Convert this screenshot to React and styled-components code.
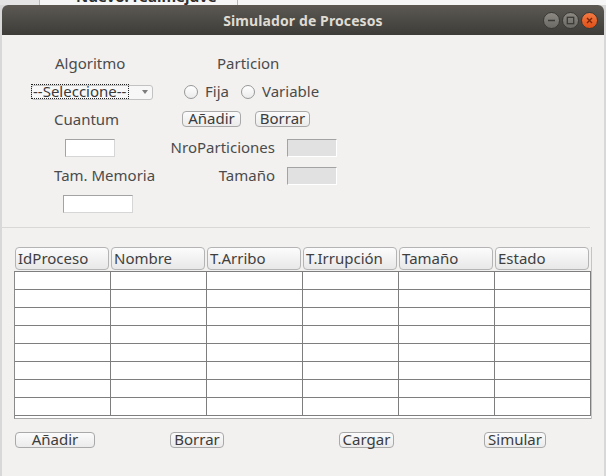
import React from "react";
import styled, { createGlobalStyle } from "styled-components";

const GlobalStyle = createGlobalStyle`
  html, body {
    margin: 0;
    padding: 0;
    background: #d8d8d8;
  }
  body {
    width: 606px;
    height: 476px;
    overflow: hidden;
    font-family: "Noto Sans", "Open Sans", sans-serif;
  }
  * { box-sizing: border-box; }
`;

const COLUMNS = ["IdProceso", "Nombre", "T.Arribo", "T.Irrupción", "Tamaño", "Estado"];
const ROWS = 8;

const App = () => {
  return (
    <>
      <GlobalStyle />
      <Page>
        <Backdrop>
          <BackdropSide />
          <BackdropIcon>
            <svg width="13" height="5" viewBox="0 0 13 5">
              <rect x="0.5" y="-6" width="10" height="10" fill="#fff" stroke="#6a6a6a" />
              <path d="M7 5 L12 -1" stroke="#4e9a06" strokeWidth="3" />
            </svg>
          </BackdropIcon>
          <BackdropText>Nuevo: realmejuve</BackdropText>
        </Backdrop>

        <Window>
          <TitleBar>
            <span />
            <Title>Simulador de Procesos</Title>
            <Controls>
              <WinButton>
                <svg width="17" height="17" viewBox="0 0 17 17">
                  <path d="M5 8.5 H12" stroke="#3b3a36" strokeWidth="1.6" />
                </svg>
              </WinButton>
              <WinButton>
                <svg width="17" height="17" viewBox="0 0 17 17">
                  <rect x="5.3" y="5.3" width="6.4" height="6.4" fill="none" stroke="#3b3a36" strokeWidth="1.3" />
                </svg>
              </WinButton>
              <WinButton $close>
                <svg width="17" height="17" viewBox="0 0 17 17">
                  <path d="M6 6 L11 11 M11 6 L6 11" stroke="#7a2406" strokeWidth="1.4" />
                </svg>
              </WinButton>
            </Controls>
          </TitleBar>

          <Content>
            <FormGrid>
              <Cell $at={53}><Label>Algoritmo</Label></Cell>
              <Cell $at={47}><Label>Particion</Label></Cell>

              <Cell $at={29}>
                <Combo>
                  <ComboText>--Seleccione--</ComboText>
                  <ComboArrow />
                </Combo>
              </Cell>
              <Cell $at={14}>
                <Radio />
                <RadioLabel>Fija</RadioLabel>
                <Radio />
                <RadioLabel>Variable</RadioLabel>
              </Cell>

              <Cell $at={52}><Label>Cuantum</Label></Cell>
              <Cell $at={12} $up>
                <Button $w={59}>Añadir</Button>
                <Button $w={55} $gap={14}>Borrar</Button>
              </Cell>

              <Cell $at={63}><Field $w={50} /></Cell>
              <Cell $at={0}>
                <FieldLabel>NroParticiones</FieldLabel>
                <Field $w={50} $disabled />
              </Cell>

              <Cell $at={52}><Label>Tam. Memoria</Label></Cell>
              <Cell $at={0}>
                <FieldLabel>Tamaño</FieldLabel>
                <Field $w={50} $disabled />
              </Cell>

              <Cell $at={61}><Field $w={70} /></Cell>
              <Cell $at={0} />
            </FormGrid>

            <Separator />

            <TablePane>
              <HeaderRow>
                {COLUMNS.map((c) => (
                  <HeaderCell key={c}>{c}</HeaderCell>
                ))}
              </HeaderRow>
              <TableBody>
                {Array.from({ length: ROWS * COLUMNS.length }).map((_, i) => (
                  <BodyCell key={i} />
                ))}
              </TableBody>
              <TableFoot />
            </TablePane>

            <ButtonRow>
              <Button $w={80}>Añadir</Button>
              <Button $w={54}>Borrar</Button>
              <Button $w={55}>Cargar</Button>
              <Button $w={62}>Simular</Button>
            </ButtonRow>
          </Content>
        </Window>
      </Page>
    </>
  );
};

const Page = styled.div`
  display: flex;
  flex-direction: column;
  width: 606px;
  height: 476px;
`;

const Backdrop = styled.div`
  display: flex;
  height: 5px;
  overflow: hidden;
  background: #f6f6f6;
`;

const BackdropSide = styled.div`
  width: 40px;
  background: #e4e4e4;
  border-right: 1px solid #b9b9b9;
`;

const BackdropIcon = styled.div`
  margin-left: 7px;
`;

const BackdropText = styled.div`
  margin-left: 16px;
  margin-top: -13px;
  font-weight: 700;
  font-size: 15px;
  line-height: 18px;
  color: #2f2f2f;
  padding-right: 20px;
  border-right: 1px solid #b9b9b9;
`;

const Window = styled.div`
  margin-left: 2px;
  width: 602px;
  flex: 1;
  background: #f2f1f0;
  border-radius: 6px 6px 0 0;
  overflow: hidden;
`;

const TitleBar = styled.div`
  height: 30px;
  display: grid;
  grid-template-columns: 1fr auto 1fr;
  align-items: center;
  background: linear-gradient(#5c5953, #3d3c38);
`;

const Title = styled.div`
  font-weight: 700;
  font-size: 14px;
  color: #dfdbd2;
  letter-spacing: 0.1px;
`;

const Controls = styled.div`
  justify-self: end;
  display: flex;
  gap: 2px;
  padding-right: 6px;
`;

const WinButton = styled.div`
  width: 17px;
  height: 17px;
  border-radius: 50%;
  border: 1px solid #3a3935;
  background: ${(p) =>
    p.$close
      ? "linear-gradient(#f37a44, #df4f17)"
      : "linear-gradient(#8c8983, #6b6964)"};
  display: flex;
  align-items: center;
  justify-content: center;
  svg { margin: -1px; }
`;

const Content = styled.div`
  padding-top: 15px;
`;

const FormGrid = styled.div`
  display: grid;
  grid-template-columns: 168px 1fr;
  grid-auto-rows: 28px;
`;

const Cell = styled.div`
  display: flex;
  align-items: center;
  padding-left: ${(p) => p.$at}px;
  padding-bottom: ${(p) => (p.$up ? 2 : 0)}px;
`;

const Label = styled.span`
  font-size: 15px;
  line-height: 20px;
  margin-top: -2px;
  color: #4b4b4b;
`;

const FieldLabel = styled(Label)`
  width: 105px;
  text-align: right;
  margin-right: 12px;
`;

const Combo = styled.div`
  display: flex;
  align-items: center;
  width: 122px;
  height: 15px;
  border: 1px solid #c2c2c2;
  border-radius: 3px;
  background: #f7f7f7;
`;

const ComboText = styled.span`
  height: 15px;
  margin-left: -1px;
  margin-top: -1px;
  padding: 0 2px 0 1px;
  border: 1px dotted #222;
  font-size: 15px;
  line-height: 12px;
  color: #3a3a3a;
`;

const ComboArrow = styled.span`
  margin-left: auto;
  margin-right: 4px;
  width: 0;
  height: 0;
  border-left: 3.5px solid transparent;
  border-right: 3.5px solid transparent;
  border-top: 4px solid #7c7c7c;
`;

const Radio = styled.span`
  width: 14px;
  height: 14px;
  border-radius: 50%;
  border: 1px solid #979797;
  background: linear-gradient(#ffffff, #ebebeb);
`;

const RadioLabel = styled(Label)`
  margin-left: 7px;
  margin-right: 12px;
`;

const Button = styled.div`
  width: ${(p) => p.$w}px;
  height: 16px;
  margin-left: ${(p) => p.$gap || 0}px;
  border: 1px solid #a9a9a9;
  border-radius: 4px;
  background: linear-gradient(#fbfbfb, #ebebeb);
  font-size: 15px;
  line-height: 13px;
  text-align: center;
  color: #3c3c3c;
`;

const Field = styled.div`
  width: ${(p) => p.$w}px;
  height: 18px;
  background: ${(p) => (p.$disabled ? "#e1e1e1" : "#ffffff")};
  border-top: 1px solid #a3a3a3;
  border-left: 1px solid #a3a3a3;
  border-right: 1px solid ${(p) => (p.$disabled ? "#ffffff" : "#d6d6d6")};
  border-bottom: 1px solid ${(p) => (p.$disabled ? "#ffffff" : "#d6d6d6")};
`;

const Separator = styled.div`
  height: 1px;
  margin-top: 9px;
  margin-right: 14px;
  background: #d9d8d6;
`;

const TablePane = styled.div`
  margin-top: 19px;
  margin-left: 12px;
  width: 578px;
  border-right: 1px solid #c4c4c4;
`;

const HeaderRow = styled.div`
  display: grid;
  grid-template-columns: repeat(6, 96px);
  padding-left: 1px;
  height: 23px;
`;

const HeaderCell = styled.div`
  margin-right: 2px;
  border: 1px solid #b4b4b4;
  border-radius: 4px;
  background: linear-gradient(#fcfcfc, #e8e8e8);
  font-size: 15px;
  line-height: 20px;
  padding-left: 2px;
  color: #3f3f3f;
  white-space: nowrap;
  overflow: hidden;
`;

const TableBody = styled.div`
  margin-top: 1px;
  display: grid;
  grid-template-columns: repeat(6, 96px);
  border-left: 1px solid #8a8a8a;
  border-top: 1px solid #7e7e7e;
  background: #ffffff;
`;

const BodyCell = styled.div`
  height: 18px;
  border-right: 1px solid #7e7e7e;
  border-bottom: 1px solid #7e7e7e;
`;

const TableFoot = styled.div`
  height: 3px;
  background: #ffffff;
  border-left: 1px solid #8a8a8a;
  border-bottom: 1px solid #a8a8a8;
`;

const ButtonRow = styled.div`
  display: grid;
  grid-template-columns: 155px 169px 145px auto;
  padding-left: 13px;
  margin-top: 13px;
`;

export default App;
